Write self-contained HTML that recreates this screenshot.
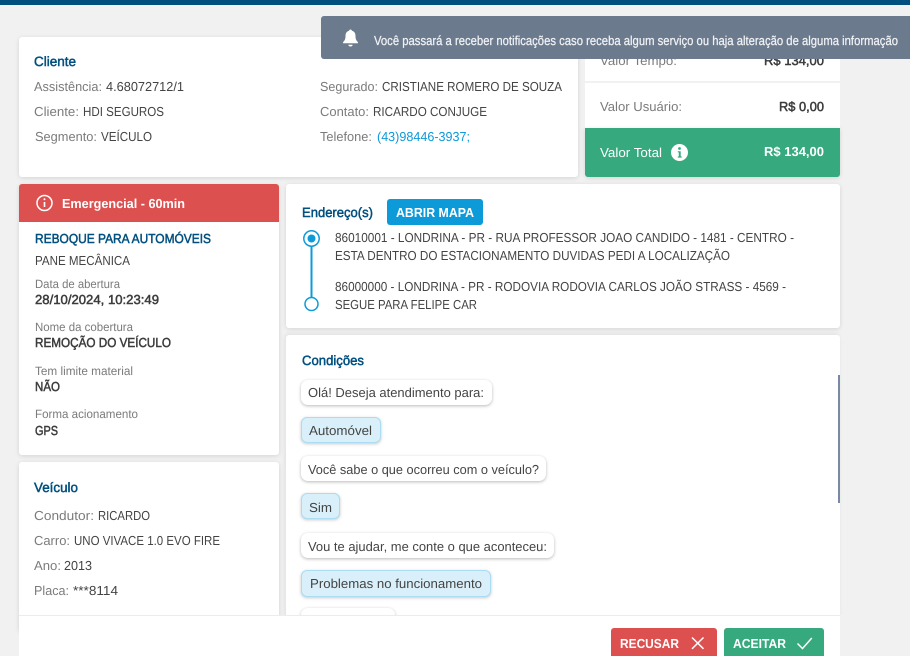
<!DOCTYPE html>
<html lang="pt-BR">
<head>
<meta charset="utf-8">
<title>Serviço</title>
<style>
html,body{margin:0;padding:0;width:910px;height:656px;overflow:hidden;background:#f1f1f1}
#root{position:relative;width:910px;height:656px;overflow:hidden;background:#f1f1f1;contain:paint}
.b{position:absolute;box-sizing:border-box}
.card{background:#fff;border-radius:3px;box-shadow:0 1px 5px rgba(0,0,0,.12)}
.bub{background:#fff;border-radius:7px;box-shadow:0 1px 3px rgba(0,0,0,.28)}
.blue{background:#d9eff9;border:1px solid #aadcf3;border-radius:6px;box-shadow:0 1px 3px rgba(0,0,0,.22)}
svg{position:absolute;left:0;top:0}
text{font-family:"Liberation Sans",sans-serif;font-size:13px;fill:#444}
.l{fill:#7b7b7b}
.t{fill:#00507f;stroke:#00507f;stroke-width:.5px;font-size:13.5px}
.s{fill:#7b7b7b;font-size:12px}
.d{fill:#3c3c3c;stroke:#3c3c3c;stroke-width:.5px}
.w{fill:#fff;font-weight:bold}
.a{fill:#0d9ad9}
</style>
</head>
<body>
<div id="root">
<div class="b" style="left:0;top:0;width:910px;height:5px;background:#00507f"></div>

<div class="b card" style="left:19px;top:37px;width:559px;height:140px"></div>
<div class="b" style="left:585px;top:37px;width:255px;height:44px;background:#fff"></div>
<div class="b" style="left:585px;top:83px;width:255px;height:45px;background:#fff"></div>
<div class="b" style="left:585px;top:128px;width:255px;height:49px;background:#36a97f;border-radius:0 0 3px 3px;box-shadow:0 1px 5px rgba(0,0,0,.12)"></div>

<div class="b card" style="left:19px;top:184px;width:260px;height:271px"></div>
<div class="b" style="left:19px;top:184px;width:260px;height:38px;background:#dd5050;border-radius:3px 3px 0 0"></div>
<div class="b card" style="left:19px;top:462px;width:260px;height:170px"></div>

<div class="b card" style="left:286px;top:184px;width:554px;height:144px"></div>
<div class="b" style="left:387px;top:199px;width:96px;height:26px;background:#0d9ad9;border-radius:3px"></div>
<div class="b" style="left:286px;top:335px;width:554px;height:300px;background:#fff;border-radius:3px;box-shadow:-1px -1px 4px rgba(0,0,0,.08)"></div>
<div class="b" style="left:838px;top:375px;width:2px;height:128px;background:#7a89a3"></div>

<div class="b bub" style="left:301px;top:380px;width:191px;height:25px"></div>
<div class="b blue" style="left:301px;top:417px;width:80px;height:26px"></div>
<div class="b bub" style="left:301px;top:456px;width:245px;height:25px"></div>
<div class="b blue" style="left:301px;top:493px;width:39px;height:26px"></div>
<div class="b bub" style="left:301px;top:533px;width:253px;height:25px"></div>
<div class="b blue" style="left:301px;top:570px;width:190px;height:27px"></div>
<div class="b bub" style="left:301px;top:608px;width:94px;height:25px"></div>

<svg width="910" height="656" viewBox="0 0 910 656">
<g text-rendering="geometricPrecision">
<text class="t" x="34" y="66" textLength="42" lengthAdjust="spacingAndGlyphs">Cliente</text>
<text class="l" x="34" y="91" textLength="68" lengthAdjust="spacingAndGlyphs">Assistência:</text>
<text x="106" y="91" textLength="78" lengthAdjust="spacingAndGlyphs">4.68072712/1</text>
<text class="l" x="34" y="116" textLength="45" lengthAdjust="spacingAndGlyphs">Cliente:</text>
<text x="83" y="116" textLength="81" lengthAdjust="spacingAndGlyphs">HDI SEGUROS</text>
<text class="l" x="35" y="141" textLength="62" lengthAdjust="spacingAndGlyphs">Segmento:</text>
<text x="101" y="141" textLength="51" lengthAdjust="spacingAndGlyphs">VEÍCULO</text>
<text class="l" x="320" y="91" textLength="58" lengthAdjust="spacingAndGlyphs">Segurado:</text>
<text x="382" y="91" textLength="180" lengthAdjust="spacingAndGlyphs">CRISTIANE ROMERO DE SOUZA</text>
<text class="l" x="320" y="116" textLength="49" lengthAdjust="spacingAndGlyphs">Contato:</text>
<text x="373" y="116" textLength="114" lengthAdjust="spacingAndGlyphs">RICARDO CONJUGE</text>
<text class="l" x="320" y="141" textLength="52" lengthAdjust="spacingAndGlyphs">Telefone:</text>
<text class="a" x="377" y="141" textLength="93" lengthAdjust="spacingAndGlyphs">(43)98446-3937;</text>

<text class="l" x="600" y="65" textLength="77" lengthAdjust="spacingAndGlyphs">Valor Tempo:</text>
<text class="d" x="764" y="65" textLength="60" lengthAdjust="spacingAndGlyphs">R$ 134,00</text>
<text class="l" x="600" y="111" textLength="82" lengthAdjust="spacingAndGlyphs">Valor Usuário:</text>
<text class="d" x="779" y="111" textLength="45" lengthAdjust="spacingAndGlyphs">R$ 0,00</text>
<text x="600" y="157" textLength="62" lengthAdjust="spacingAndGlyphs" style="fill:#fff">Valor Total</text>
<text class="w" x="764" y="156" textLength="60" lengthAdjust="spacingAndGlyphs">R$ 134,00</text>
<circle cx="679.5" cy="152.5" r="8.5" fill="#fff"/>
<circle cx="679.5" cy="148.5" r="1.4" fill="#36a97f"/>
<path d="M677.8 151.2h2.9v5.2h1v1.2h-3.9v-1.2h1v-4h-1z" fill="#36a97f"/>

<text class="w" x="62" y="208" textLength="123" lengthAdjust="spacingAndGlyphs">Emergencial - 60min</text>
<circle cx="44.5" cy="203" r="7.5" fill="none" stroke="#fff" stroke-width="1.5"/>
<path d="M44.5 202v5" stroke="#fff" stroke-width="1.6" fill="none"/>
<circle cx="44.5" cy="199.3" r="1" fill="#fff"/>

<text class="t" x="35" y="243" textLength="176" lengthAdjust="spacingAndGlyphs" style="font-size:13px">REBOQUE PARA AUTOMÓVEIS</text>
<text x="35" y="265" textLength="95" lengthAdjust="spacingAndGlyphs">PANE MECÂNICA</text>
<text class="s" x="35" y="288" textLength="85" lengthAdjust="spacingAndGlyphs">Data de abertura</text>
<text class="d" x="35" y="304" textLength="124" lengthAdjust="spacingAndGlyphs">28/10/2024, 10:23:49</text>
<text class="s" x="35" y="331" textLength="98" lengthAdjust="spacingAndGlyphs">Nome da cobertura</text>
<text class="d" x="35" y="347" textLength="136" lengthAdjust="spacingAndGlyphs">REMOÇÃO DO VEÍCULO</text>
<text class="s" x="35" y="375" textLength="98" lengthAdjust="spacingAndGlyphs">Tem limite material</text>
<text class="d" x="35" y="391" textLength="25" lengthAdjust="spacingAndGlyphs">NÃO</text>
<text class="s" x="35" y="418" textLength="103" lengthAdjust="spacingAndGlyphs">Forma acionamento</text>
<text class="d" x="35" y="435" textLength="23" lengthAdjust="spacingAndGlyphs">GPS</text>

<text class="t" x="34" y="492" textLength="44" lengthAdjust="spacingAndGlyphs">Veículo</text>
<text class="l" x="34" y="520" textLength="60" lengthAdjust="spacingAndGlyphs">Condutor:</text>
<text x="98" y="520" textLength="52" lengthAdjust="spacingAndGlyphs">RICARDO</text>
<text class="l" x="34" y="545" textLength="36" lengthAdjust="spacingAndGlyphs">Carro:</text>
<text x="74" y="545" textLength="146" lengthAdjust="spacingAndGlyphs">UNO VIVACE 1.0 EVO FIRE</text>
<text class="l" x="34" y="570" textLength="27" lengthAdjust="spacingAndGlyphs">Ano:</text>
<text x="64" y="570" textLength="28" lengthAdjust="spacingAndGlyphs">2013</text>
<text class="l" x="34" y="595" textLength="35" lengthAdjust="spacingAndGlyphs">Placa:</text>
<text x="73" y="595" textLength="45" lengthAdjust="spacingAndGlyphs">***8114</text>

<text class="t" x="302" y="217" textLength="71" lengthAdjust="spacingAndGlyphs">Endereço(s)</text>
<text class="w" x="396" y="217" textLength="78" lengthAdjust="spacingAndGlyphs">ABRIR MAPA</text>
<path d="M311.5 246V297" stroke="#0d9ad9" stroke-width="2" fill="none"/>
<circle cx="311.5" cy="238.5" r="7.7" fill="#fff" stroke="#0d9ad9" stroke-width="1.5"/>
<circle cx="311.5" cy="238.5" r="4" fill="#0d9ad9"/>
<circle cx="311.5" cy="304" r="6.5" fill="#fff" stroke="#0d9ad9" stroke-width="1.5"/>
<text x="335" y="242" textLength="459" lengthAdjust="spacingAndGlyphs">86010001 - LONDRINA - PR - RUA PROFESSOR JOAO CANDIDO - 1481 - CENTRO -</text>
<text x="335" y="260" textLength="395" lengthAdjust="spacingAndGlyphs">ESTA DENTRO DO ESTACIONAMENTO DUVIDAS PEDI A LOCALIZAÇÃO</text>
<text x="335" y="291" textLength="451" lengthAdjust="spacingAndGlyphs">86000000 - LONDRINA - PR - RODOVIA RODOVIA CARLOS JOÃO STRASS - 4569 -</text>
<text x="335" y="309" textLength="142" lengthAdjust="spacingAndGlyphs">SEGUE PARA FELIPE CAR</text>

<text class="t" x="302" y="365" textLength="62" lengthAdjust="spacingAndGlyphs">Condições</text>
<text x="308" y="397" textLength="176" lengthAdjust="spacingAndGlyphs">Olá! Deseja atendimento para:</text>
<text x="309" y="435" textLength="63" lengthAdjust="spacingAndGlyphs">Automóvel</text>
<text x="308" y="474" textLength="231" lengthAdjust="spacingAndGlyphs">Você sabe o que ocorreu com o veículo?</text>
<text x="309" y="512" textLength="23" lengthAdjust="spacingAndGlyphs">Sim</text>
<text x="308" y="551" textLength="239" lengthAdjust="spacingAndGlyphs">Vou te ajudar, me conte o que aconteceu:</text>
<text x="310" y="588" textLength="172" lengthAdjust="spacingAndGlyphs">Problemas no funcionamento</text>
</g>
</svg>

<div class="b" style="left:321px;top:16px;width:589px;height:43px;background:#6c7a8d;border-radius:3px 0 0 3px"></div>
<div class="b" style="left:19px;top:615px;width:821px;height:41px;background:#fff;border-top:1px solid #ececec;box-shadow:18px 0 0 #f1f1f1"></div>
<div class="b" style="left:840px;top:615px;width:70px;height:41px;background:#f1f1f1"></div>
<div class="b" style="left:611px;top:628px;width:106px;height:28px;background:#dd5050;border-radius:3px 3px 0 0"></div>
<div class="b" style="left:724px;top:628px;width:100px;height:28px;background:#36a97f;border-radius:3px 3px 0 0"></div>

<svg width="910" height="656" viewBox="0 0 910 656">
<g text-rendering="geometricPrecision">
<text x="374" y="45" textLength="524" lengthAdjust="spacingAndGlyphs" style="fill:#f0f2f5;stroke:#f0f2f5;stroke-width:.25px;font-size:13px">Você passará a receber notificações caso receba algum serviço ou haja alteração de alguma informação</text>
<path d="M350.5 29.5c.8 0 1.3.6 1.4 1.3 2.5.6 3.6 2.6 3.6 5.2 0 3.2.8 4.6 2.4 6v1.3h-14.8V42c1.6-1.4 2.4-2.8 2.4-6 0-2.6 1.1-4.6 3.6-5.2.1-.7.6-1.3 1.4-1.3z" fill="#fff"/>
<path d="M348.4 44.8h4.2a2.1 1.7 0 0 1-4.2 0z" fill="#fff"/>
<text class="w" x="620" y="648" textLength="59" lengthAdjust="spacingAndGlyphs">RECUSAR</text>
<path d="M692 637.5L703.5 648.8M703.5 637.5L692 648.8" stroke="#fff" stroke-width="1.5" fill="none"/>
<text class="w" x="733" y="648" textLength="53" lengthAdjust="spacingAndGlyphs">ACEITAR</text>
<path d="M797.5 643.5L802.5 648.5L811.8 638" stroke="#fff" stroke-width="1.5" fill="none"/>
</g>
</svg>
</div>
</body>
</html>
